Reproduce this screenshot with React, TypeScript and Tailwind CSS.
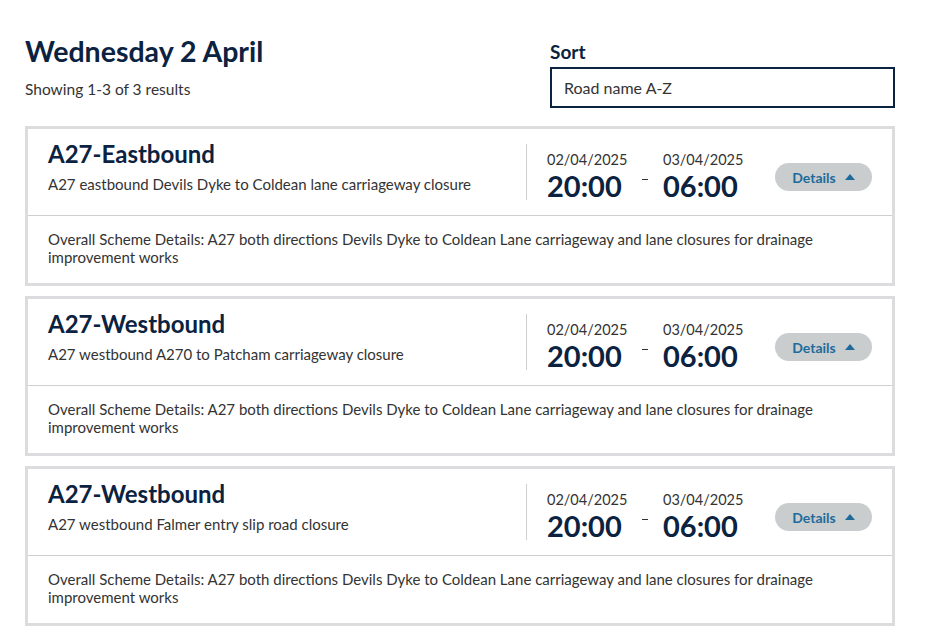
const items = [
  {
    title: 'A27-Eastbound',
    desc: 'A27 eastbound Devils Dyke to Coldean lane carriageway closure',
  },
  {
    title: 'A27-Westbound',
    desc: 'A27 westbound A270 to Patcham carriageway closure',
  },
  {
    title: 'A27-Westbound',
    desc: 'A27 westbound Falmer entry slip road closure',
  },
];

const scheme =
  'Overall Scheme Details: A27 both directions Devils Dyke to Coldean Lane carriageway and lane closures for drainage improvement works';

function Card({ title, desc }: { title: string; desc: string }) {
  return (
    <div className="border-[3px] border-[#dcdcdf] bg-white">
      <div className="flex items-start h-[87px] border-b border-[#cfcfd2]">
        <div className="w-[498px] pl-[20px] pt-[11px]">
          <h2 className="text-[24px] font-bold leading-[28px] text-[#0b2240]">{title}</h2>
          <p className="mt-[6px] text-[15px] leading-[20px] text-[#333]">{desc}</p>
        </div>
        <div className="mt-[15px] h-[56px] w-px bg-[#cfcfd2]" />
        <div className="flex items-start pl-[20px] pt-[22px] text-[#0b2240]">
          <div className="w-[80px]">
            <div className="text-[14.5px] leading-[18px] text-[#333]">02/04/2025</div>
            <div className="mt-[2px] text-[29px] font-bold leading-[30px]">20:00</div>
          </div>
          <div className="w-[36px] flex justify-center pt-[28px]">
            <div className="w-[6px] h-px bg-[#333]" />
          </div>
          <div className="w-[80px]">
            <div className="text-[14.5px] leading-[18px] text-[#333]">03/04/2025</div>
            <div className="mt-[2px] text-[29px] font-bold leading-[30px]">06:00</div>
          </div>
        </div>
        <button className="ml-[32px] mt-[34px] flex items-center gap-[9px] h-[28px] w-[97px] justify-center rounded-full bg-[#c9cdce] text-[14px] font-bold text-[#1e6b9b]">
          Details
          <svg width="10" height="6" viewBox="0 0 10 6">
            <path d="M5 0L10 6H0Z" fill="#1e6b9b" />
          </svg>
        </button>
      </div>
      <div className="px-[20px] pt-[14px] pb-[17px] text-[15px] leading-[18px] text-[#333]">{scheme}</div>
    </div>
  );
}

export default function App() {
  return (
    <div className="min-h-screen bg-white px-[25px] pt-[34px] font-['Lato','Liberation_Sans',sans-serif]">
      <div className="w-[870px]">
        <div className="flex items-start justify-between">
          <div>
            <h1 className="text-[28.5px] font-bold leading-[34px] text-[#0b2240]">Wednesday 2 April</h1>
            <p className="mt-[11px] text-[15.5px] leading-[20px] text-[#333]">Showing 1-3 of 3 results</p>
          </div>
          <div className="w-[345px] pt-[6px]">
            <div className="text-[19px] font-bold leading-[24px] text-[#0b2240]">Sort</div>
            <div className="mt-[3px] h-[41px] border-2 border-[#0b2240] flex items-center px-[12px] text-[16px] text-[#333]">
              Road name A-Z
            </div>
          </div>
        </div>
        <div className="mt-[18px] flex flex-col gap-[10px]">
          {items.map((it, i) => (
            <Card key={i} {...it} />
          ))}
        </div>
      </div>
    </div>
  );
}
